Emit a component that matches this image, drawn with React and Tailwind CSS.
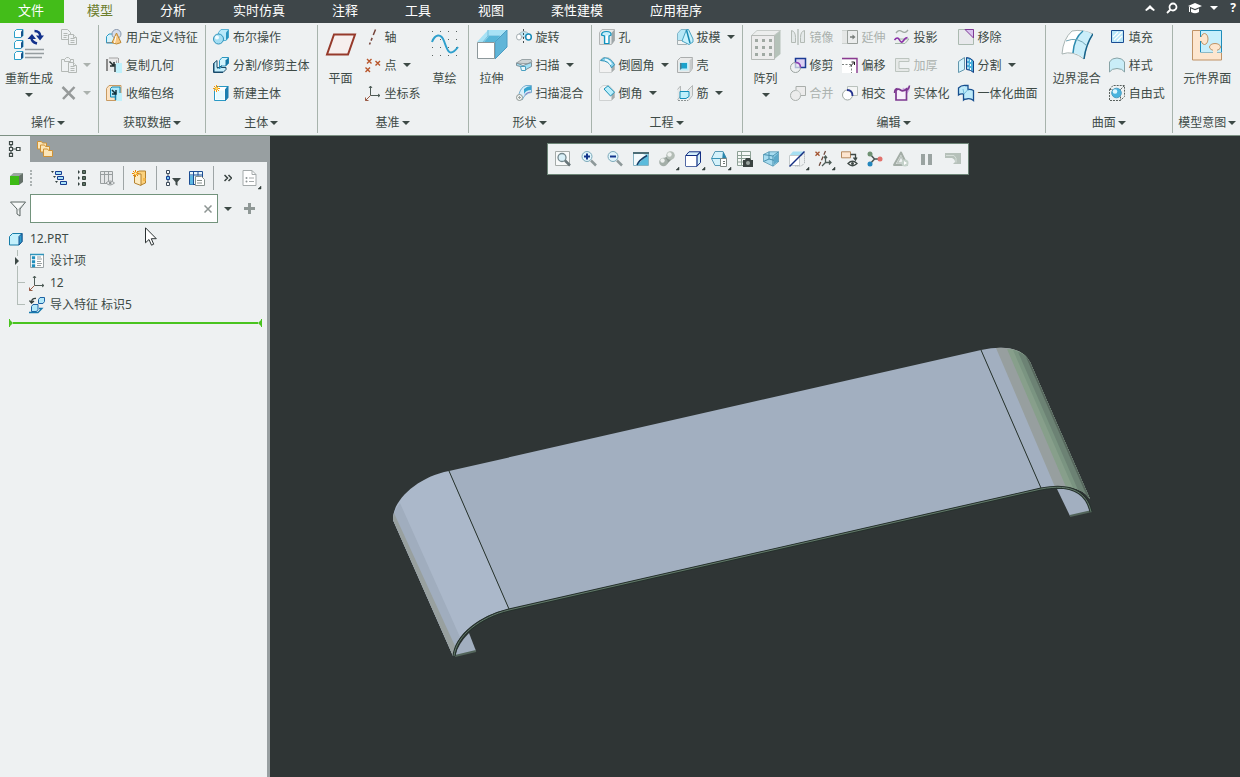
import React from 'react';

const icons = {
    copy: (
        <g fill="#eef1f2" stroke="#b4b9b6">
            <path d="M.5 .5h6l3 3v7h-9z" />
            <path d="M2.5 4.5h4M2.5 6.5h4M2.5 8.5h3" />
            <path d="M7.5 5.5h5l3 3v7h-8z" />
            <path d="M9.5 9.5h4M9.5 11.5h4M9.5 13.5h4M12.5 5.5v3h3" />
        </g>
    ),
    paste: (
        <g fill="#eef1f2" stroke="#b4b9b6">
            <path d="M.5 2.5h12v12H.5z" />
            <path d="M3.5 4.5v-2l2-2h2l2 2v2z" />
            <path d="M7.5 5.5h5l3 3v7h-8z" />
            <path d="M9.5 9.5h4M9.5 11.5h4M9.5 13.5h4M12.5 5.5v3h3" />
        </g>
    ),
    del: <path d="M1.5 2 13.5 14M13.5 2 2 14" stroke="#969a9a" strokeWidth="2.5" fill="none" />,
    udf: (
        <g>
            <path d="M.5 7.5 3 5h8v7l-2 2H.5z" fill="#d5f2fb" stroke="#2b9ac4" />
            <path d="M.5 13.5h8.5" stroke="#7c8d95" />
            <circle cx="10.5" cy="5" r="4.5" fill="#d5ddec" stroke="#8796ab" />
            <path d="M10.5 4 15 13.5q-4.5 3-9 0z" fill="#f7c883" stroke="#bf8a35" />
            <path d="M10 7 8.5 14" stroke="#fff" />
        </g>
    ),
    copyGeom: (
        <g>
            <path d="M.5 3.5 3 .8h9v5l-2 2v6H.5z" fill="#e9e9e9" />
            <path d="M3 1h9M10.5 3.5v3M12.5 1v5" stroke="#a3a3a3" fill="none" />
            <path d="M0 2h2v12H0z" fill="#8a8a8a" />
            <path d="M10 6h6v10h-6z" fill="#bff0fb" />
            <path d="M8 7h2v8H8z" fill="#5d6e72" />
            <path d="M3.5 4.5l4 4M8 5v4H4" stroke="#1f2b2b" strokeWidth="1.5" fill="none" />
        </g>
    ),
    shrink: (
        <g>
            <path d="M.5 3.5 3 .5h12v12l-2 3H.5z" fill="#fce3c4" stroke="#c79a62" />
            <path d="M4.5 3.5 6 2h8v8l-2 2H4.5z" fill="#aee9fb" stroke="#1188b5" />
            <path d="M10 8h6v8h-6z" fill="#bff0fb" />
            <path d="M9.5 8v7" stroke="#167fa9" strokeWidth="1.5" />
            <path d="M6 5l3.5 3.5M10 5v4H6" stroke="#12313b" strokeWidth="1.5" fill="none" />
        </g>
    ),
    boolean: (
        <g>
            <path d="M5.5 3.5 8 .5h7.5v8l-2.5 3H5.5z" fill="#b8e9fa" stroke="#5bb4d6" />
            <path d="M13 3.5 15.5.5v8l-2.5 3z" fill="#2a95c0" />
            <circle cx="5.5" cy="10" r="5" fill="#a4def3" stroke="#2f93bb" />
            <circle cx="4" cy="8.5" r="2" fill="#f3fcff" />
        </g>
    ),
    splitBody: (
        <g>
            <path d="M.5 6.5 4 3.5v7h9v2l-3 3H.5z" fill="#c4eefb" stroke="#1d4a66" />
            <path d="M1 6v9h9" stroke="#174c70" fill="none" />
            <path d="M6.5 3.5 9 .5h6.5V6l-3 3H9l-2.5 3z" fill="#d3f4fd" stroke="#2b97c0" />
            <path d="M12.5 3.5 15.5.5v6l-3 3z" fill="#1477a5" />
            <path d="M4.5 11.5 9 8.5" stroke="#1a6388" />
        </g>
    ),
    newBody: (
        <g>
            <path d="M1.5 4.5 4 1.5h11l-2.5 3v11h-11z" fill="#fff" stroke="#2999c5" />
            <path d="M12.5 4.5 15 1.5v11l-2.5 3z" fill="#1d7fb0" stroke="#1d7fb0" />
            <path d="M3 5.5h8.5v9H3z" fill="#e8fafe" />
            <path d="M3.5 0v7M0 3.5h7M1 1l5 5M6 1 1 6" stroke="#f5990c" />
            <circle cx="3.5" cy="3.5" r="1.3" fill="#ffe26c" />
        </g>
    ),
    axis: <path d="M10.5 .5 4.5 15.5" stroke="#76453b" strokeWidth="1.5" strokeDasharray="6 3 3 2" fill="none" />,
    point: (
        <path d="M2 2l4.5 4.5M6.5 2 2 6.5M10.5 4l4.5 4.5M15 4l-4.5 4.5M.5 10.5 5 15M5 10.5.5 15" stroke="#b8552b" strokeWidth="1.4" fill="none" />
    ),
    csys: (
        <g fill="none" stroke="#4d5b56">
            <path d="M5.5 10.5V1M5.5 10.5H15M4 3l1.5-2L7 3M13 9l2 1.5-2 1.5" />
            <path d="M5.5 10.5.5 15.5M.5 12.5v3h3" stroke="#9b5b46" />
        </g>
    ),
    revolve: (
        <g fill="none">
            <path d="M3 5q5-5 10 0v3H3z" fill="#bde8f6" stroke="#a7b5ba" />
            <ellipse cx="3" cy="8" rx="2.5" ry="3" stroke="#a7b0b4" fill="#fff" />
            <ellipse cx="12.5" cy="8" rx="2.8" ry="3" stroke="#1d8db8" fill="#fff" strokeWidth="1.5" />
            <path d="M7.5 0v16" stroke="#444e50" strokeDasharray="2 2" />
        </g>
    ),
    sweep: (
        <g>
            <path d="M.5 6 6 2.5h9l1 2-4 2H7z" fill="#cdd4d6" stroke="#9aa4a7" />
            <path d="M.5 6 7 8.5l8.5-3v4L10 12.5l-2-2L.5 8.5z" fill="#9fdff5" stroke="#7f9098" />
            <path d="M4.5 9.5h5v4h-4z" fill="#e9f8fc" stroke="#4a9fc0" />
        </g>
    ),
    sweepBlend: (
        <g>
            <path d="M3 9Q5 2 10 .5h5.5v7l-3 .5Q8 10 6 15z" fill="#d9effa" stroke="#77afd0" />
            <path d="M8 4q3-3 7-3v4q-5 0-7 4z" fill="#38a5cf" />
            <path d="M8.5 10q2-2.5 6-3" stroke="#8c7fc0" fill="none" />
            <circle cx="3.5" cy="12.5" r="3" fill="#f2f4f2" stroke="#8d9693" />
            <path d="M3.5 11v3M2 12.5h3" stroke="#9da5a2" />
        </g>
    ),
    hole: (
        <g>
            <path d="M.5 3.5 3 .5h12.5v11l-3 4H.5z" fill="#e6e8e8" stroke="#b3b6b6" />
            <path d="M12.5 4 15.5.5v11l-3 4z" fill="#9ea6a8" />
            <path d="M2.5 6q0-3.5 5-3.5T12 6l-2 1v7.5H5.5V7z" fill="#c6effb" stroke="#0f92be" strokeWidth="1.2" />
            <path d="M7 6.5h2v7.5H7z" fill="#fff" />
        </g>
    ),
    round: (
        <g>
            <path d="M.5 3.5 4 .5h6l5.5 6v6l-3 3H.5z" fill="#f2f2f2" stroke="#cfd2d2" />
            <path d="M12.5 9.5 15.5 7v5.5l-3 3z" fill="#a5acac" />
            <path d="M1.5 3.5 5 .8q7 0 10.5 7l-3 3q-2-7-11-7.3z" fill="#8bd4ee" stroke="#2e93b8" />
            <path d="M6 2.5q4 .5 6 5" stroke="#e8faff" strokeWidth="2" fill="none" />
        </g>
    ),
    chamfer: (
        <g>
            <path d="M.5 3.5 4 .5h6l5.5 6v6l-3 3H.5z" fill="#f2f2f2" stroke="#cfd2d2" />
            <path d="M12.5 9.5 15.5 7v5.5l-3 3z" fill="#a5acac" />
            <path d="M5 4 9 .8l6.5 6.4-4 3.8z" fill="#baeffc" stroke="#1c90b7" />
        </g>
    ),
    draft: (
        <g>
            <path d="M.5 4.5 4 .5h6l-1 14H.5z" fill="#b6e7f6" stroke="#81b5c8" />
            <path d="M.5 11.5h9v4h-9z" fill="#f1f4f4" stroke="#a4afb2" />
            <path d="M5 12 9.5.5h2L16 10v3l-4 2.5z" fill="#c7f2fd" stroke="#4aa3c2" />
            <path d="M9.5 1 13 14" stroke="#1689b3" strokeWidth="1.5" />
        </g>
    ),
    shell: (
        <g>
            <path d="M.5 3.5 3.5.5h12v11l-3 4H.5z" fill="#e9eaea" stroke="#aaadad" />
            <path d="M12.5 3.5 15.5.5v11l-3 4z" fill="#c6c9c9" />
            <path d="M2.5 5.5h9v8h-9z" fill="#bdecf9" />
            <path d="M4 6h6v5.500H4z" fill="#1ba2cc" />
            <path d="M3 6h1.500v5.500L3 13z" fill="#4a7f93" />
        </g>
    ),
    rib: (
        <g>
            <path d="M.5 4.5 3.5 1v10l-3 4M10.5 5.5 15.5.5v10l-4 5" fill="#e6e8e8" stroke="#b4b8b8" />
            <path d="M3 6.5h9v5l-3 2H3z" fill="#bff0fb" stroke="#1590ba" />
            <path d="M1 15.5h10" stroke="#8b9292" strokeDasharray="2 1" />
        </g>
    ),
    mirror: (
        <g fill="none" stroke="#b3bab5">
            <path d="M1.5 13.5V1.5q4 1 4 7v5zM14.5 13.5V1.5q-4 1-4 7v5z" fill="#e4e9e9" />
            <path d="M8 0v16" stroke="#9ea9a1" />
        </g>
    ),
    trim: (
        <g>
            <path d="M5.5 1.5h10v9h-10z" fill="#dcd0f3" stroke="#1b3a94" strokeWidth="1.5" />
            <circle cx="5.5" cy="10.5" r="5" fill="#eef1f2" fillOpacity=".7" stroke="#9ba3a0" />
            <path d="M5.5 5.5q5 0 5 5" stroke="#8b3fb5" strokeWidth="1.5" fill="none" />
        </g>
    ),
    merge: (
        <g stroke="#a9aeab">
            <path d="M6 1.5h9.5v9H6z" fill="#ececec" />
            <circle cx="5.5" cy="10.5" r="5" fill="#ececec" />
            <path d="M6 6h4v4.5H6z" fill="#ececec" stroke="none" />
            <path d="M5.5 5.5q5 0 5 5" stroke="#c9cecb" fill="none" />
        </g>
    ),
    extend: (
        <g>
            <path d="M0 1.5h7v13H0" fill="#e5e7e6" stroke="#ccd1ce" />
            <path d="M5.5 1.5h10v13h-10z" fill="#ebeded" stroke="#999f9b" />
            <path d="M8 8h4" stroke="#777d7a" strokeWidth="1.5" />
            <path d="M10.5 5.5 13.5 8l-3 2.500z" fill="#777d7a" />
        </g>
    ),
    offset: (
        <g>
            <path d="M0 3h14v13H0z" fill="#fff" />
            <path d="M0 7.5h9M9.5 8v8" stroke="#7c8380" strokeDasharray="2 1.5" />
            <path d="M0 1.5h15V16" stroke="#8b3a90" strokeWidth="1.4" fill="none" />
            <path d="M8 9.5 12 5.500M9.500 5h3v3" stroke="#1a1a1a" fill="none" />
        </g>
    ),
    intersect: (
        <g>
            <path d="M5.5 1.5h10v9h-10z" fill="#f3f5f4" stroke="#b9c1bc" />
            <circle cx="5.5" cy="10" r="5" fill="#fff" stroke="#9fa8a3" />
            <path d="M5 5q5.5 0 5.5 6" stroke="#24338f" strokeWidth="1.8" fill="none" />
        </g>
    ),
    project: (
        <g fill="none">
            <path d="M2 4q3-4 6-1.5T14 1" stroke="#9fa9a3" strokeWidth="1.3" />
            <path d="M1 14.5h10l4-4.5H5" stroke="#a4b5aa" fill="#e9eeeb" />
            <path d="M.5 11q3-4 5 0t4 .5q2-3 4-3" stroke="#8a2fa8" strokeWidth="1.6" />
        </g>
    ),
    thicken: <path d="M15 1.5H1.500v13H15v-3H5v-7h10z" fill="#e6e9e8" stroke="#bcc4bf" />,
    solidify: (
        <g>
            <path d="M7.5 6.5 9 2.5q3 3 6.5-2v5l-3 4z" fill="#d1aee5" />
            <path d="M2 15V5.5q2-2.5 4.5-.5t6-1V15z" fill="#f7f0fb" stroke="#7c3790" strokeWidth="1.7" />
            <path d="M.5 8q0-4 3-4.5M12 5.5q3-1 3.5-5" stroke="#7c3790" strokeWidth="1.5" fill="none" />
        </g>
    ),
    remove: (
        <g>
            <path d="M.5 .5h15v15H.5z" fill="#e8e9ec" stroke="#abbab0" />
            <path d="M7 .5h8.5V9z" fill="#d8c1ee" stroke="#7e3a94" />
        </g>
    ),
    split: (
        <g>
            <path d="M.5 4.5 6.500.5v12l-6 3z" fill="#d3f2fb" stroke="#6397ad" />
            <path d="M8.5 .5q4 0 7 3.5v11.5q-3-3-7-3z" fill="#4aaedb" stroke="#163f82" />
            <path d="M10 2v10M12.5 3v10" stroke="#fff" strokeDasharray="2 2" />
        </g>
    ),
    unite: (
        <g>
            <path d="M.5 3q3-3 7-2.5L10 .5v4q3-.5 5.5 1v10q-3-2.500-7-1.500-2 0-3 1v-6q-3-.5-5 1z" fill="#bdeafa" stroke="#174f8f" strokeWidth="1.3" />
            <path d="M5 4l1 5 4-4.500" fill="none" stroke="#73bcdb" />
        </g>
    ),
    fill: (
        <g>
            <path d="M2.5 1.5h12v12h-12z" fill="#b8e6f8" stroke="#1a4d93" />
            <path d="M4 8l5-5M5 11l8-8M8 12l5-5" stroke="#fff" strokeWidth="1.3" />
        </g>
    ),
    style: (
        <path d="M.5 5q2-4 7.5-4t7.5 4v10q-2-3.500-7.500-3.500T.5 15z" fill="#c9edf8" stroke="#87a3a6" />
    ),
    freestyle: (
        <g>
            <path d="M.5 4.5 4 .5h11.500v11l-4 4H.5zM.5 4.500h11v11M11.500 4.500l4-4" fill="none" stroke="#59615e" strokeDasharray="2 1" />
            <circle cx="7.5" cy="8" r="4.8" fill="#4bb4de" stroke="#4d9fc2" />
            <circle cx="6" cy="6.5" r="2.300" fill="#dff7ff" />
        </g>
    ),
    zoomFit: (
        <g>
            <path d="M.5 .5h14v14H.5z" fill="#f8fafa" stroke="#a5aba9" />
            <circle cx="7" cy="6.5" r="4" fill="#d9f0f8" stroke="#74888e" strokeWidth="1.3" />
            <path d="M10 9.5l5 5" stroke="#677478" strokeWidth="2.5" />
        </g>
    ),
    zoomIn: (
        <g>
            <circle cx="6" cy="5.5" r="5" fill="#e1f5fb" stroke="#7ba9ba" />
            <path d="M6 2.5v6M3 5.5h6" stroke="#12358c" strokeWidth="2" />
            <path d="M10 9.5l5 5" stroke="#8d9899" strokeWidth="2.5" />
        </g>
    ),
    zoomOut: (
        <g>
            <circle cx="6" cy="5.5" r="5" fill="#e1f5fb" stroke="#7ba9ba" />
            <path d="M3 5.5h6" stroke="#12358c" strokeWidth="2" />
            <path d="M10 9.5l5 5" stroke="#8d9899" strokeWidth="2.5" />
        </g>
    ),
    repaint: (
        <g>
            <path d="M.5 1.5h15v13H.5z" fill="#f4fafc" stroke="#86b4c4" />
            <path d="M15 3v11H4L15 3z" fill="#5bbbdc" />
            <path d="M8 2.500h7v2z" fill="#8fd3e8" />
            <path d="M0 2h16" stroke="#4d6d76" strokeWidth="2" />
            <path d="M4 14Q6 9 14 4.500" stroke="#153f68" strokeWidth="1.5" fill="none" />
        </g>
    ),
    shading: (
        <g>
            <path d="M5 7l5-2 3 3-5 5z" fill="#8b9790" />
            <circle cx="11.5" cy="4.5" r="4.300" fill="#b2bcb5" />
            <circle cx="4.500" cy="11" r="4.300" fill="#a4afa8" />
            <circle cx="10.5" cy="3.500" r="2.200" fill="#eef1ef" />
            <circle cx="3.500" cy="9.500" r="2.200" fill="#eef1ef" />
        </g>
    ),
    savedView: (
        <g>
            <path d="M.8 4.5 4 .8h11.500v10.700L12 15.200H.8z" fill="#d3effa" stroke="#142f83" />
            <path d="M1 5h10.500v10H1z" fill="#fff" />
            <path d="M.8 4.500H12v10.700M12 4.500 15.500.8" fill="none" stroke="#142f83" strokeWidth="1.2" />
        </g>
    ),
    viewMgr: (
        <g>
            <path d="M4 .5h8l3.500 7-3.500 7H4l-3.500-7z" fill="#d4f1fa" stroke="#5799b5" />
            <path d="M12 .5 15.500 7.500 11 9z" fill="#2a86ad" />
            <path d="M.5 7.5h11" stroke="#3b93b5" />
            <path d="M9.500 7.500h6v8h-6z" fill="#fff" stroke="#7d8582" />
            <path d="M12 10.500h2M12 12.500h2" stroke="#6e7673" />
        </g>
    ),
    camera: (
        <g>
            <path d="M.5 .5h13v14H.5zM.5 4.5h13M.5 7.5h13M.5 11h13M4.500 .5v14" fill="#f6f8f7" stroke="#8da095" />
            <path d="M6 9h2l1-2h4l1 2h2v7H6z" fill="#3b4341" />
            <circle cx="11" cy="12" r="2" fill="#9aa39f" />
        </g>
    ),
    perspective: (
        <g>
            <path d="M.5 3.500 6 .8h9.500v10L10 15.200.5 10.500z" fill="#a8dcf0" stroke="#6fa8bf" />
            <path d="M.5 3.500 10 5v10M10 5 15.500.8M.5 10.500 6 8l9.500 2.500M6 8V.8" fill="none" stroke="#468fae" />
            <path d="M11 6l4-4v8.500l-4 3z" fill="#5da9c9" />
        </g>
    ),
    section: (
        <g>
            <path d="M.5 4.500 4 .5h11l-3.500 4z" fill="#a7dff2" />
            <path d="M.5 4.500h10v10H.5z" fill="#fff" stroke="#c4cacc" />
            <path d="M12 5l3.500-3v10l-3 3H6" fill="none" stroke="#9ba2a4" strokeDasharray="1 1" />
            <path d="M.5 15.500 15.500 .5" stroke="#142f83" strokeWidth="1.5" />
        </g>
    ),
    datumDisp: (
        <g fill="none" strokeWidth="1.300">
            <path d="M.5 .8l4 4M4.500 .8l-4 4" stroke="#a3532f" />
            <path d="M10.500 0 4 15" stroke="#6f4a3d" strokeDasharray="4 2" />
            <path d="M10.500 5.500v6H16M10.500 11.500 7 15M14 9.500l2 2-2 2M9 7l1.500-2L12 7" stroke="#4d5b56" />
        </g>
    ),
    annotation: (
        <g fill="none">
            <path d="M.5 .8h9v6h-9z" fill="#fde5cf" stroke="#b5895e" />
            <path d="M9.500 3.500h5v5M12.500 6.500l2 2.500 1.500-2.500" stroke="#3e4845" strokeWidth="1.300" />
            <path d="M7 12.500q4.500-4.500 9 0-4.500 4.500-9 0z" fill="#fff" stroke="#3e4845" strokeWidth="1.300" />
            <circle cx="11.500" cy="12.500" r="1.500" fill="#3e4845" />
        </g>
    ),
    spin: (
        <g>
            <path d="M3 3l4.500 5L3 13M7.500 8H13" stroke="#4a5552" strokeWidth="1.5" fill="none" />
            <circle cx="3" cy="3" r="2.5" fill="#6e9172" />
            <circle cx="13" cy="8" r="2.5" fill="#e2716c" />
            <circle cx="3" cy="13" r="2.5" fill="#2487bd" />
        </g>
    ),
    analysis: (
        <g>
            <path d="M8 1.500 1 14h13z" fill="none" stroke="#a3ada6" strokeWidth="2" strokeLinejoin="round" />
            <path d="M8 5.500 4.500 12h7z" fill="none" stroke="#bcc5bf" strokeWidth="1.5" />
            <circle cx="12" cy="12" r="3.500" fill="#c5d2ca" />
            <path d="M11 10l3 2-3 2z" fill="#fff" />
        </g>
    ),
    pause: <path d="M2 3h4v11H2zM9 3h4v11H9z" fill="#9aa3a1" />,
    stop: (
        <g>
            <path d="M0 2h16v11H8l2-2q0-3-3-4H0z" fill="#b6c1ba" />
            <path d="M1 4.500h8q3 2 2 7" stroke="#d5ded8" fill="none" />
        </g>
    ),
    modelTree: (
        <path d="M2.500 .7h3v3h-3zM2.500 6.500h3v3h-3zM2.500 12.300h3v3h-3zM9.500 6.500h3.500v3H9.500zM4 4v2M4 10v2M6 8h3" fill="#fff" stroke="#3f4a48" strokeWidth="1.2" />
    ),
    folders: (
        <g stroke="#cf9236" fill="#fce6b8">
            <path d="M.5 .5h4l1 1.500h4v6h-9z" />
            <path d="M3.500 4h4l1 1.500h4v5.500h-9z" />
            <path d="M6.500 8h4l1 1.500h4v6h-9z" />
        </g>
    ),
    greenCube: (
        <g>
            <path d="M2 6 5.500 3H15l-3.500 3z" fill="#9aa7a0" />
            <path d="M11 6 15 3v9l-4 3z" fill="#647069" />
            <path d="M2 6h9v9H2z" fill="#3dbb16" />
        </g>
    ),
    expandTree: (
        <g>
            <path d="M4.500 1.500h6v3h-6zM6.500 6.500h6v3h-6zM9.500 11.500h6v3h-6z" fill="#a9e2f6" stroke="#173c91" />
            <path d="M0 1h3L1.500 3zM2 6h3L3.500 8zM4 11h3l-1.500 2z" fill="#354240" />
        </g>
    ),
    collapse: (
        <g>
            <path d="M7.500 .5h3v3h-3zM7.500 6.500h3v3h-3zM7.500 12.500h3v3h-3z" fill="#5d7365" stroke="#37453e" />
            <path d="M3 0v4l2-2zM3 6v4l2-2zM3 12v4l2-2z" fill="#354240" />
        </g>
    ),
    columns: (
        <g>
            <path d="M1.500 1.500h12v12h-12zM1.500 4.500h12M5.500 1.500v12M9.500 1.500v12" fill="#e5e7e8" stroke="#989e9f" />
            <path d="M7 13q4-4 8.500 0-4.500 4-8.500 0z" fill="#e9ebec" stroke="#989e9f" />
            <circle cx="11.200" cy="13" r="1.300" fill="#8c9293" />
        </g>
    ),
    newFolder: (
        <g>
            <path d="M4 3 7 1h6.500v12L9 15z" fill="#fbd17d" stroke="#b5822e" />
            <path d="M2.500 4H9v11.500L2.500 13z" fill="#fdebc1" stroke="#b5822e" />
            <path d="M11 8h2.500v3H11z" fill="#f6b94a" />
            <path d="M3.500 0v7M0 3.500h7M1 1l5 5M6 1 1 6" stroke="#f08a00" />
            <circle cx="3.500" cy="3.500" r="1.200" fill="#fff2a3" />
        </g>
    ),
    treeFilter: (
        <g>
            <path d="M1.500 .5h3v3h-3zM1.500 12.500h3v3h-3zM3 4v2M3 10v2" fill="#fff" stroke="#3c4b5a" />
            <path d="M1.500 6.500h3v3h-3z" fill="#78cdf0" stroke="#173c91" />
            <path d="M7 8h9l-3.500 4v4l-2-1.500V12z" fill="#3f4a48" />
        </g>
    ),
    treeColumns: (
        <g>
            <path d="M.5 1.500h13v13H.5zM.5 5h13M4.500 1.500v13M9 1.500v4" fill="#e9f8fd" stroke="#1c4d93" />
            <path d="M1 5.500h3v9H1z" fill="#5cb8e2" />
            <path d="M6.500 6.500h6l3 3v6h-9z" fill="#fff" stroke="#86918d" />
            <path d="M8 10.500h5M8 13h5" stroke="#86918d" />
        </g>
    ),
    docProps: (
        <g>
            <path d="M1 .5h9l4 4v11H1z" fill="#fff" stroke="#a4aaab" />
            <path d="M10 .5v4h4M7 8h5M7 11.500h5" fill="none" stroke="#a4aaab" />
            <circle cx="4.500" cy="8" r="1" fill="#8d9495" />
            <circle cx="4.500" cy="11.500" r="1" fill="#8d9495" />
        </g>
    ),
    funnel: (
        <g>
            <path d="M.5 1h15L10 8v7l-3-2V8z" fill="#f7f9f9" stroke="#5c6765" />
            <path d="M8.500 8 14 2 9.500 8v6z" fill="#8c9694" />
        </g>
    ),
    part: (
        <g>
            <path d="M1.500 5.500 4.500 2.500H14v8l-3 3.500H1.500z" fill="#c4f0fc" stroke="#167da8" />
            <path d="M11 5.500 14 2.500v8L11 14z" fill="#2f9fd0" stroke="#174c8a" />
        </g>
    ),
    designItems: (
        <g>
            <path d="M1.500 1.500h13v13h-13z" fill="#fff" stroke="#99a2a4" />
            <path d="M1 1.500h14" stroke="#2f94bb" strokeWidth="1.5" />
            <path d="M3.500 4h2v1.500h-2zM3.500 8h2v1.500h-2zM3.500 12h2v1.500h-2z" fill="#fff" stroke="#218fbd" strokeWidth="1.300" />
            <path d="M8 4h4M8 6h5M8 8.500h4M8 10.500h5M8 12.500h4" stroke="#9aa1a2" />
        </g>
    ),
    importFeat: (
        <g>
            <path d="M9.500 2.500 11 .5h4.500v4l-1.500 2H9.500z" fill="#b3e8f9" stroke="#1d63a5" />
            <path d="M2.500 9.500 4 7.500h5v5l-1.500 2h-5z" fill="#b3e8f9" stroke="#1d63a5" />
            <path d="M0 15.500h9l4-4h-3" fill="none" stroke="#1679ac" strokeWidth="1.300" />
            <path d="M7 1.500Q3 1 2.500 5M.5 3.500l2 2.500 2.500-2" fill="none" stroke="#333d3b" strokeWidth="1.300" />
        </g>
    ),
};

const bigIcons = {
    regenerate: (
        <g>
            {[0, 11, 22].map((y) => (
                <g key={y} transform={`translate(1 ${y})`}>
                    <path d="M.5 2.500 2.500 .5H9v6L7 8.500H.5z" fill="#fff" stroke="#2b9fc9" />
                    <path d="M7 2.500 9 .5v6L7 8.500z" fill="#15548c" />
                </g>
            ))}
            <path d="M12 20.500h19M12 24.500h19M12 28.500h17" stroke="#959da0" strokeWidth="1.500" />
            <path d="M14.500 10 19 5l4 5zM23 6.500h8L27 11.500z" fill="#12318c" />
            <path d="M18.500 9q0 4 5.500 5.500M21.500 2q5.500 0 6 5.500" stroke="#12318c" strokeWidth="2.500" fill="none" />
        </g>
    ),
    plane: <path d="M9 5.500h21L23 25.500H2z" fill="#f6efee" stroke="#963a2b" strokeWidth="2" />,
    sketch: (
        <g>
            <g fill="#5a6462">
                {[2, 10, 18, 26].map((y) => [3, 11, 19, 27].map((x) => <path key={`${x}-${y}`} d={`M${x} ${y}h1v1h-1z`} />))}
            </g>
            <path d="M3 13C6 5 12 4 15 12s5 18 14 6" fill="none" stroke="#2e9fcc" strokeWidth="2" />
        </g>
    ),
    extrude: (
        <g>
            <path d="M1 13 12 1h19L19 13z" fill="#a8e2f5" />
            <path d="M12 1v6l-5 6M12 7h12" stroke="#74bdda" fill="none" />
            <path d="M19 13 31 1v17L19 30z" fill="#60b5d8" stroke="#4b9cc2" />
            <path d="M13 7h11l-5 6H8z" fill="#58b6d8" />
            <path d="M1.500 13.500h17v16h-17z" fill="#fff" stroke="#8d989b" />
        </g>
    ),
    pattern: (
        <g>
            <path d="M1.500 6.500 7 1.500h23.500L24 6.500z" fill="#eceeed" stroke="#c7ccc9" />
            <path d="M24.500 6.500l6-5V25l-6 5z" fill="#b5c2b9" />
            <path d="M1.500 6.500h23v24h-23z" fill="#ececec" stroke="#b6bab7" />
            {[10, 17, 24].map((y) => [6, 13, 20].map((x) => (
                <path key={`${x}-${y}`} d={`M${x - 1} ${y}h3v3h-3z`} fill="#a0a9a3" />
            )))}
        </g>
    ),
    boundary: (
        <g>
            <path d="M11 2Q21 0 32 5q-7 10-9 25Q12 21 1 25 2 10 11 2z" fill="#fff" stroke="#a9b5b4" />
            <path d="M22 2q5 0 10 4-7 10-9 24-4-5-11-6Q13 9 22 2z" fill="#caeefa" />
            <path d="M32 5q-7 10-9 25" stroke="#17628a" strokeWidth="1.500" fill="none" />
            <path d="M22 2Q13 9 12 24" stroke="#2c8bb0" strokeWidth="1.500" fill="none" />
            <path d="M5 12q12-5 21 5" stroke="#6fa4b5" fill="none" />
        </g>
    ),
    component: (
        <g>
            <path d="M9.500 1.500h21v22h-21z" fill="#c8effc" stroke="#1e8cba" />
            <ellipse cx="13.500" cy="10" rx="3.500" ry="5.500" fill="#fde6cf" stroke="#bf9265" />
            <ellipse cx="24" cy="18" rx="5.500" ry="3.500" fill="#fde6cf" stroke="#bf9265" />
            <path d="M8 8h4v4H8zM22 19h4v5h-4z" fill="#fde6cf" />
            <path d="M1.500 1.500h7.500v22h21.500v7.500h-29z" fill="#fde6cf" />
            <path d="M9 1.500H1.500V31h29v-7" fill="none" stroke="#bf9265" />
        </g>
    ),
};

const Icon = ({ name }) => (
    <svg className="w-4 h-4 shrink-0 overflow-visible" viewBox="0 0 16 16" fill="none" aria-hidden="true">{icons[name]}</svg>
);

const Arrow = ({ className = '' }) => (
    <svg className={`w-2 h-1 shrink-0 ${className}`} viewBox="0 0 8 4" aria-hidden="true">
        <path d="M0 0h8L4 4z" fill="currentColor" />
    </svg>
);

const Corner = () => (
    <svg className="absolute right-0 bottom-0 w-[5px] h-[5px]" viewBox="0 0 5 5" aria-hidden="true">
        <path d="M4 1v3H1z" fill="#37413f" stroke="#37413f" strokeWidth=".5" />
    </svg>
);

const Tool = ({ icon, label, title, arrow, disabled }) => (
    <button
        type="button"
        aria-label={label || title}
        disabled={disabled}
        className={`flex items-center h-7 whitespace-nowrap ${disabled ? 'text-[#abb2ae]' : ''}`}
    >
        <Icon name={icon} />
        {label && <span className="ml-1 pt-0.5">{label}</span>}
        {arrow && <Arrow className="ml-1.5" />}
    </button>
);

const BigTool = ({ icon, label, arrow }) => (
    <button type="button" className="flex flex-col items-center justify-start h-[84px] pt-1.5 min-w-8 whitespace-nowrap">
        <svg className="w-8 h-8" viewBox="0 0 32 32" fill="none" aria-hidden="true">{bigIcons[icon]}</svg>
        <span className="mt-2 leading-5">{label}</span>
        {arrow && <Arrow className="mt-1" />}
    </button>
);

const Column = ({ items }) => (
    <div className="flex flex-col items-start">
        {items.map((item) => <Tool key={item.icon} {...item} />)}
    </div>
);

const groups = [
    {
        label: '操作',
        pad: 'pl-[5px] pr-[7px]',
        items: [
            { big: true, icon: 'regenerate', label: '重新生成', arrow: true },
            [
                { icon: 'copy', title: '复制', disabled: true },
                { icon: 'paste', title: '粘贴', disabled: true, arrow: true },
                { icon: 'del', title: '删除', disabled: true, arrow: true },
            ],
        ],
    },
    {
        label: '获取数据',
        items: [[
            { icon: 'udf', label: '用户定义特征' },
            { icon: 'copyGeom', label: '复制几何' },
            { icon: 'shrink', label: '收缩包络' },
        ]],
    },
    {
        label: '主体',
        items: [[
            { icon: 'boolean', label: '布尔操作' },
            { icon: 'splitBody', label: '分割/修剪主体' },
            { icon: 'newBody', label: '新建主体' },
        ]],
    },
    {
        label: '基准',
        items: [
            { big: true, icon: 'plane', label: '平面' },
            [
                { icon: 'axis', label: '轴' },
                { icon: 'point', label: '点', arrow: true },
                { icon: 'csys', label: '坐标系' },
            ],
            { big: true, icon: 'sketch', label: '草绘' },
        ],
    },
    {
        label: '形状',
        items: [
            { big: true, icon: 'extrude', label: '拉伸' },
            [
                { icon: 'revolve', label: '旋转' },
                { icon: 'sweep', label: '扫描', arrow: true },
                { icon: 'sweepBlend', label: '扫描混合' },
            ],
        ],
    },
    {
        label: '工程',
        items: [
            [
                { icon: 'hole', label: '孔' },
                { icon: 'round', label: '倒圆角', arrow: true },
                { icon: 'chamfer', label: '倒角', arrow: true },
            ],
            [
                { icon: 'draft', label: '拔模', arrow: true },
                { icon: 'shell', label: '壳' },
                { icon: 'rib', label: '筋', arrow: true },
            ],
        ],
    },
    {
        label: '编辑',
        items: [
            { big: true, icon: 'pattern', label: '阵列', arrow: true },
            [
                { icon: 'mirror', label: '镜像', disabled: true },
                { icon: 'trim', label: '修剪' },
                { icon: 'merge', label: '合并', disabled: true },
            ],
            [
                { icon: 'extend', label: '延伸', disabled: true },
                { icon: 'offset', label: '偏移' },
                { icon: 'intersect', label: '相交' },
            ],
            [
                { icon: 'project', label: '投影' },
                { icon: 'thicken', label: '加厚', disabled: true },
                { icon: 'solidify', label: '实体化' },
            ],
            [
                { icon: 'remove', label: '移除' },
                { icon: 'split', label: '分割', arrow: true },
                { icon: 'unite', label: '一体化曲面' },
            ],
        ],
    },
    {
        label: '曲面',
        items: [
            { big: true, icon: 'boundary', label: '边界混合' },
            [
                { icon: 'fill', label: '填充' },
                { icon: 'style', label: '样式' },
                { icon: 'freestyle', label: '自由式' },
            ],
        ],
    },
    {
        label: '模型意图',
        pad: 'pl-0.5',
        items: [{ big: true, icon: 'component', label: '元件界面' }],
    },
];

const RibbonTabs = () => {
    const tabs = ['分析', '实时仿真', '注释', '工具', '视图', '柔性建模', '应用程序'];

    return (
        <header className="flex h-[23px] bg-[#3e4649] text-white text-[13px] leading-[18px]">
            <nav className="flex">
                <button type="button" className="w-16 pr-0.5 pb-1 bg-[#43bd19]">文件</button>
                <button type="button" className="pl-[23px] pr-6 pb-1 bg-[#eef1f2] text-[#6c7d2c]">模型</button>
                {tabs.map((tab) => (
                    <button key={tab} type="button" className="pl-[23px] pr-6 pb-1 whitespace-nowrap">{tab}</button>
                ))}
            </nav>
            <div className="ml-auto flex items-center gap-2.5 pb-2 pr-0.5">
                <button type="button" aria-label="最小化功能区">
                    <svg className="w-3 h-3" viewBox="0 0 12 12"><path d="M1 8 6 3l5 5-1.500 1L6 6.500 2.500 9z" fill="#fff" /></svg>
                </button>
                <button type="button" aria-label="搜索">
                    <svg className="w-3 h-3" viewBox="0 0 12 12" fill="none" stroke="#fff" strokeWidth="1.800">
                        <circle cx="7" cy="5" r="3.500" /><path d="M4.500 7.500 1 11" />
                    </svg>
                </button>
                <button type="button" aria-label="学习连接器" className="flex items-center gap-2">
                    <svg className="w-3.5 h-3" viewBox="0 0 14 12" fill="#fff">
                        <path d="M7 1l7 3-7 3-7-3zM3 6.500l4 1.800 4-1.800V10q-4 2.500-8 0zM1 5h1v5H1z" />
                    </svg>
                    <Arrow />
                </button>
                <button type="button" aria-label="帮助" className="w-2.5 font-bold text-xs leading-[15px]">?</button>
            </div>
        </header>
    );
};

const Ribbon = () => (
    <div className="flex border-b border-[#7d9184] bg-[#eef1f2]">
        {groups.map((group, i) => (
            <React.Fragment key={group.label}>
                {i > 0 && <div className="w-px my-0.5 shrink-0 bg-[#a7b3ac]" />}
                <section aria-label={group.label} className={`flex flex-col ${group.pad || 'px-[7px]'} ${i === groups.length - 1 ? 'grow' : 'shrink-0'}`}>
                    <div className={`flex gap-2 ${i === groups.length - 1 ? 'justify-center' : ''}`}>
                        {group.items.map((item, n) => (
                            item.big ? <BigTool key={n} {...item} /> : <Column key={n} items={item} />
                        ))}
                    </div>
                    <button type="button" className="flex items-center justify-center gap-0.5 h-7 pt-1 whitespace-nowrap">
                        {group.label}
                        <Arrow />
                    </button>
                </section>
            </React.Fragment>
        ))}
    </div>
);

const PanelButton = ({ icon, label }) => (
    <button type="button" aria-label={label} className="w-6 h-6 flex items-center justify-center">
        <Icon name={icon} />
    </button>
);

const TreeRow = ({ icon, label, last, expandable }) => (
    <li className="flex items-center h-[22px]">
        <span className="relative ml-[17px] mr-1 w-2 h-full flex flex-col">
            <span className={`h-1/2 border-l border-[#b3bdb8] ${expandable ? '' : 'border-b'}`} />
            {!last && <span className="h-1/2 border-l border-[#b3bdb8]" />}
            {expandable && (
                <button type="button" aria-label="展开" className="absolute -left-1 top-1.5 w-2.5 h-2.5 bg-[#eef1f2]">
                    <svg className="w-2.5 h-2.5" viewBox="0 0 10 10"><path d="M2 1v8l4-4z" fill="#3d4946" /></svg>
                </button>
            )}
        </span>
        <Icon name={icon} />
        <span className="ml-[5px]">{label}</span>
    </li>
);

const ModelPanel = () => (
    <aside className="relative w-[270px] shrink-0 bg-[#eef1f2] border-r-[3px] border-[#989fa1]">
        <div className="flex h-[26px] bg-[#989fa1]">
            <button type="button" aria-label="模型树" className="w-[30px] flex items-center justify-center bg-[#eef1f2]"><Icon name="modelTree" /></button>
            <button type="button" aria-label="文件夹浏览器" className="w-[30px] flex items-center justify-center"><Icon name="folders" /></button>
        </div>

        <div className="flex items-center h-8 pl-1">
            <PanelButton icon="greenCube" label="模型" />
            <span className="ml-0.5 mr-[15px] h-4 border-l-2 border-dotted border-[#abb2b2]" />
            <PanelButton icon="expandTree" label="展开全部" />
            <PanelButton icon="collapse" label="折叠全部" />
            <PanelButton icon="columns" label="显示列" />
            <span className="w-px h-6 mx-1 bg-[#9ea5a6]" />
            <PanelButton icon="newFolder" label="新建组" />
            <span className="w-px h-6 mx-1 bg-[#9ea5a6]" />
            <PanelButton icon="treeFilter" label="树过滤器" />
            <PanelButton icon="treeColumns" label="树列" />
            <span className="w-px h-6 mx-1 bg-[#9ea5a6]" />
            <button type="button" aria-label="更多" className="w-5 h-6 flex items-center justify-center">
                <svg className="w-2 h-2" viewBox="0 0 8 8"><path d="M.5 1 3.500 4l-3 3M4.500 1l3 3-3 3" fill="none" stroke="#37413f" strokeWidth="1.500" /></svg>
            </button>
            <button type="button" aria-label="设置" className="relative w-6 h-6 flex items-center justify-center">
                <Icon name="docProps" />
                <Corner />
            </button>
        </div>

        <div className="flex items-center h-[29px] pl-2.5 pr-3">
            <Icon name="funnel" />
            <div className="ml-1 flex-1 min-w-0 flex items-center h-full bg-white border border-[#72937c]">
                <input type="text" aria-label="过滤" className="flex-1 min-w-0 h-full px-1 outline-none" />
                <button type="button" aria-label="清除" className="w-[18px] h-full flex items-center justify-center">
                    <svg className="w-2 h-2" viewBox="0 0 8 8"><path d="M.5.5l7 7M7.500.5l-7 7" stroke="#8d9593" strokeWidth="1.500" /></svg>
                </button>
            </div>
            <Arrow className="ml-1.5" />
            <button type="button" aria-label="添加" className="ml-3 w-[11px] h-[11px] shrink-0">
                <svg className="w-[11px] h-[11px]" viewBox="0 0 11 11"><path d="M5.500 0v11M0 5.500h11" stroke="#8f9896" strokeWidth="3" /></svg>
            </button>
        </div>

        <ul className="pt-[5px]">
            <li className="flex items-center h-[22px] pl-2 gap-1.5">
                <Icon name="part" />
                12.PRT
            </li>
            <TreeRow icon="designItems" label="设计项" expandable />
            <TreeRow icon="csys" label="12" />
            <TreeRow icon="importFeat" label="导入特征 标识5" last />
        </ul>

        <div className="ml-[9px] mr-[5px] mt-[3px] h-2 flex items-center">
            <svg className="w-1 h-2" viewBox="0 0 4 8"><path d="M0 0h1v8H0zM1 1l3 3-3 3z" fill="#49c41f" /></svg>
            <span className="flex-1 h-0.5 bg-[#49c41f]" />
            <svg className="w-1 h-2" viewBox="0 0 4 8"><path d="M3 0h1v8H3zM3 1 0 4l3 3z" fill="#49c41f" /></svg>
        </div>

        {/* mouse pointer */}
        <svg className="absolute left-[145px] top-[91px] w-3 h-[19px]" viewBox="0 0 12 19" aria-hidden="true">
            <path d="M.5.8v15l3.500-3.300 2.500 5.700 2.200-1-2.400-5.500h5z" fill="#fff" stroke="#2b3233" />
        </svg>
    </aside>
);

const viewTools = [
    { icon: 'zoomFit', label: '重新调整' },
    { icon: 'zoomIn', label: '放大' },
    { icon: 'zoomOut', label: '缩小' },
    { icon: 'repaint', label: '重画' },
    { icon: 'shading', label: '显示样式', menu: true },
    { icon: 'savedView', label: '已保存方向', menu: true },
    { icon: 'viewMgr', label: '视图管理器', menu: true },
    { icon: 'camera', label: '外观' },
    { icon: 'perspective', label: '透视图' },
    { icon: 'section', label: '截面', menu: true },
    { icon: 'datumDisp', label: '基准显示过滤器', menu: true },
    { icon: 'annotation', label: '注释显示' },
    { icon: 'spin', label: '旋转中心' },
    { icon: 'analysis', label: '仿真' },
    { icon: 'pause', label: '暂停' },
    { icon: 'stop', label: '停止' },
];

const Viewport = () => (
    <main className="relative flex-1 flex flex-col items-center bg-[#2f3535]">
        <svg className="absolute inset-0 w-full h-full" viewBox="270 136 970 641" aria-label="12.PRT">
            {/* left bend */}
            <path d="M449 471C417 477 392 501 393 520L453 656C455 634 480 615 509 609z" fill="#abb8ca" />
            <path d="M400 503Q393 512 393 520L453 656Q454 646 460 637z" fill="#a0adbe" />
            <path d="M394 513Q393 516 393 520L453 656Q453 652 455 646z" fill="#98a09f" />
            {/* flat face */}
            <path d="M449 471 981 350 1041 488 509 609z" fill="#a2afc0" />
            {/* right bend, shaded in strips */}
            <path d="M981 350Q1018 342 1030 362L1090 499Q1082 482 1041 488z" fill="#a2afc0" />
            <path d="M996 348Q1021 346 1030 362L1090 499Q1082 485 1055 487z" fill="#979f9f" />
            <path d="M1007 349Q1023 349 1030 362L1090 499Q1083 488 1066 487z" fill="#879f8b" />
            <path d="M1013 350Q1024 352 1030 362L1090 499Q1083 490 1073 488z" fill="#7a9481" />
            <path d="M1018 352Q1026 354 1030 362L1090 499Q1084 491 1078 490z" fill="#6c8274" />
            <path d="M1026 357Q1029 359 1030 362L1090 499L1086 494z" fill="#58685e" />
            {/* folded lips */}
            <path d="M1057 489 1070 516 1091 511Q1085 487 1057 489z" fill="#a2afc0" />
            <path d="M469 633 476 651 455 656Q458 644 469 633z" fill="#a2afc0" />
            <path d="M455 656 476 651M1070 516 1092 511" stroke="#52645a" strokeWidth="2" />
            {/* sheet thickness */}
            <g fill="none" strokeLinejoin="round">
                <path d="M454 656C456 636 480 617 509 610L1041 489C1072 483 1087 493 1091 512" stroke="#26312d" strokeWidth="3" />
                <path d="M454 656C456 636 480 617 509 610L1041 489C1072 483 1087 493 1091 512" stroke="#647b6b" />
                <path d="M449 471 509 609M981 350 1041 488" stroke="#29352f" />
            </g>
        </svg>

        <div role="toolbar" className="relative mt-[7px] ml-1.5 flex h-8 px-0.5 items-center bg-[#eef1f2] border border-[#6d8577]">
            {viewTools.map((tool) => (
                <button key={tool.icon} type="button" aria-label={tool.label} className="relative w-[26px] h-6 flex items-center justify-center">
                    <Icon name={tool.icon} />
                    {tool.menu && <Corner />}
                </button>
            ))}
        </div>
    </main>
);

const App = () => (
    <div className="min-h-screen flex flex-col overflow-hidden text-xs text-[#3d4a46] font-['Noto_Sans','Noto_Sans_CJK_SC',sans-serif]">
        <RibbonTabs />
        <Ribbon />
        <div className="flex-1 flex">
            <ModelPanel />
            <Viewport />
        </div>
    </div>
);

export default App;
